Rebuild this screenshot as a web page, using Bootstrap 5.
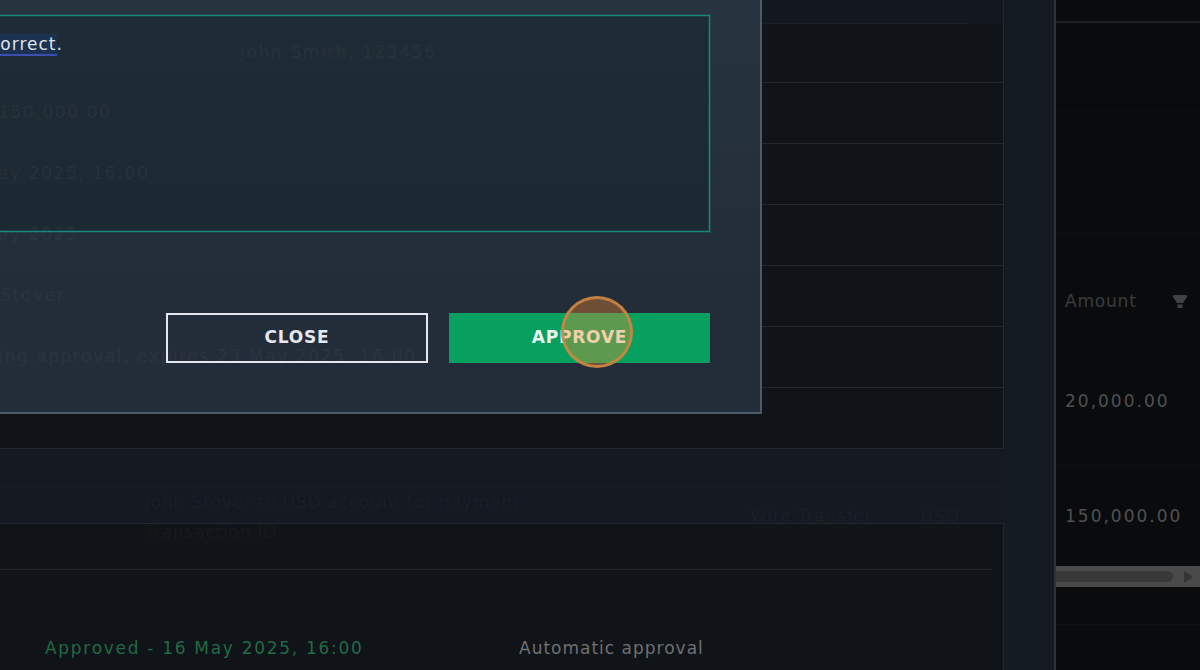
<!DOCTYPE html>
<html lang="en">
<head>
    <meta charset="UTF-8">
    <title>Approve payment</title>
    <link href="https://cdn.jsdelivr.net/npm/bootstrap@5.3.1/dist/css/bootstrap.min.css" rel="stylesheet">
    <style>
        body { background: #141a22; font-family: "DejaVu Sans", sans-serif; font-size: 17px; letter-spacing: 1px; overflow: hidden; }
        .app-shell { height: 670px; width: 1200px; }
        .main-area { width: 1056px; background: #141b23; border-right: 2px solid #2e3338; flex: none; }
        .side-area { width: 144px; background: #0a0b0d; flex: none; }

        .grid-panel { width: 1004px; background: #101418; border-right: 1px solid #24292d; }
        .grid-top { height: 24px; background: #121720; }
        .grid-top-line { width: 970px; height: 24px; border-bottom: 1px solid #1a202a; }
        .grid-row { height: 61px; border-bottom: 1px solid #24292c; }
        .grid-row-first { height: 59px; }
        .band { width: 1004px; height: 76px; background: #141922; border-bottom: 1px solid #22272c; }
        .band-line { height: 38px; border-bottom: 1px solid #1a2029; }
        .band-text { padding-top: 8px; }
        .lower-panel { width: 1004px; height: 146px; background: #101317; border-right: 1px solid #22272c; }
        .lower-head { height: 46px; line-height: 16px; border-bottom: 1px solid #1f2327; width: 992px; }

        .ghost-text { position: relative; z-index: 5; color: rgba(255,255,255,.055); white-space: nowrap; letter-spacing: 1.6px; }
        .ghost-val { margin-left: -50px; }
        .ghost-name { margin-left: 240px; }
        .ghost-desc { margin-left: 145px; letter-spacing: .8px; color: rgba(255,255,255,.035); }
        .ghost-wire { margin-left: 750px; letter-spacing: .8px; color: rgba(255,255,255,.035); }
        .ghost-usd { margin-left: 48px; letter-spacing: 1px; color: rgba(255,255,255,.035); }
        .ghost-line { height: 14px; line-height: 14px; }

        .approved-text { margin-left: 45px; width: 474px; color: #1f6b45; letter-spacing: 1.7px; }
        .auto-text { color: #6e7072; }
        .lower-row { height: 100px; padding-top: 66px; }

        .approve-dialog { position: absolute; z-index: 2; left: -300px; top: -40px; width: 1062px; height: 454px; padding: 55px 50px 0 240px;
            background: linear-gradient(#273541, #232d39 70%); border-right: 2px solid #4d5a66; border-bottom: 2px solid #4d5a66; }
        .check-box { height: 217px; background: linear-gradient(#1f2c35, #1d2932); border: 1px solid #17897a; box-shadow: 0 0 0 1px rgba(20,150,130,.22), inset 0 0 0 1px rgba(20,150,130,.22); padding: 16px 0 0 49px; color: #dfe4e8; }
        .check-link { color: #dfe4e8; background: #1c3050; text-decoration: none; border-bottom: 2px solid #3a4fb0; }
        .dialog-actions { margin-top: 81px; gap: 21px; }
        .btn.dlg-btn { width: 262px; height: 50px; border-radius: 0; font-weight: 700; font-size: 17px; letter-spacing: .8px; padding: 0; }
        .btn.dlg-close { background: transparent; color: #e4e8ee; border: 2px solid #e4e8ee; }
        .btn.dlg-approve { width: 261px; background: #07a05f; color: #e8f6ef; border: 0; }

        .click-mark { position: absolute; z-index: 6; left: 561px; top: 296px; width: 72px; height: 72px; border-radius: 50%;
            background: rgba(255,140,50,.35); border: 3px solid rgba(205,135,65,.9); }

        .side-top { height: 23px; border-bottom: 2px solid #1e2124; }
        .side-a { height: 88px; border-bottom: 1px solid #0e0f11; }
        .side-b { height: 123px; border-bottom: 1px solid #101113; }
        .side-head { height: 103px; padding: 0 12px 23px 9px; color: #3a3c3f; letter-spacing: .8px; }
        .filter-icon { margin-bottom: 5px; }
        .side-cell { padding: 2px 0 0 9px; color: #4f5154; border-bottom: 1px solid #101113; letter-spacing: 2px; }
        .cell-tall { height: 129px; }
        .cell-mid { height: 100px; border-bottom: 0; }
        .scroll-track { height: 21px; background: #4a4a4a; }
        .scroll-thumb { width: 117px; height: 11px; background: #383838; border-radius: 0 6px 6px 0; }
        .scroll-arrow { width: 0; height: 0; margin-right: 7px; border-left: 9px solid #333; border-top: 6px solid transparent; border-bottom: 6px solid transparent; }
        .side-foot { height: 38px; border-bottom: 1px solid #101113; }
    </style>
</head>
<body>
    <div class="app-shell d-flex">
        <!-- Page behind the dialog -->
        <div class="main-area d-flex flex-column">
            <div class="grid-panel">
                <div class="grid-top"><div class="grid-top-line"></div></div>
                <div class="grid-row grid-row-first d-flex align-items-center"><span class="ghost-text ghost-name">John Smith, 123456</span></div>
                <div class="grid-row d-flex align-items-center"><span class="ghost-text ghost-val">USD 150,000.00</span></div>
                <div class="grid-row d-flex align-items-center"><span class="ghost-text ghost-val">16 May 2025, 16:00</span></div>
                <div class="grid-row d-flex align-items-center"><span class="ghost-text ghost-val">16 May 2025</span></div>
                <div class="grid-row d-flex align-items-center"><span class="ghost-text ghost-val">John Stover</span></div>
                <div class="grid-row d-flex align-items-center"><span class="ghost-text ghost-val">Pending approval, expires 23 May 2025, 16:00</span></div>
                <div class="grid-row"></div>
            </div>
            <div class="band">
                <div class="band-line"></div>
                <div class="band-text d-flex flex-column">
                    <div class="ghost-line"><span class="ghost-text ghost-desc">John Stover to USD account for payment</span></div>
                    <div class="ghost-line"><span class="ghost-text ghost-wire">Wire Transfer</span><span class="ghost-text ghost-usd">USD</span></div>
                </div>
            </div>
            <div class="lower-panel">
                <div class="lower-head"><span class="ghost-text ghost-desc">Transaction ID</span></div>
                <div class="lower-row d-flex">
                    <span class="approved-text">Approved - 16 May 2025, 16:00</span>
                    <span class="auto-text">Automatic approval</span>
                </div>
            </div>
        </div>

        <!-- Right hand column -->
        <div class="side-area d-flex flex-column">
            <div class="side-top"></div>
            <div class="side-a"></div>
            <div class="side-b"></div>
            <div class="side-head d-flex align-items-end justify-content-between">
                <span>Amount</span>
                <span class="filter-icon d-flex align-items-center">
                    <svg width="16" height="14" viewBox="0 0 16 14"><path d="M1 0h14v2l-4 6H5L1 2z" fill="#3f4144"/><rect x="5.5" y="9.5" width="5" height="3.5" fill="#3f4144"/></svg>
                </span>
            </div>
            <div class="side-cell cell-tall d-flex align-items-center">20,000.00</div>
            <div class="side-cell cell-mid d-flex align-items-center">150,000.00</div>
            <div class="scroll-track d-flex align-items-center justify-content-between">
                <div class="scroll-thumb"></div>
                <div class="scroll-arrow"></div>
            </div>
            <div class="side-foot"></div>
        </div>
    </div>

    <!-- Approve dialog -->
    <div class="approve-dialog d-flex flex-column">
        <div class="check-box">
            <a class="check-link" href="#">correct</a>.
        </div>
        <div class="dialog-actions d-flex justify-content-end">
            <button class="btn dlg-btn dlg-close" type="button">CLOSE</button>
            <button class="btn dlg-btn dlg-approve" type="button">APPROVE</button>
        </div>
    </div>
    <div class="click-mark"></div>

    <script src="https://cdn.jsdelivr.net/npm/bootstrap@5.3.1/dist/js/bootstrap.bundle.min.js"></script>
</body>
</html>
